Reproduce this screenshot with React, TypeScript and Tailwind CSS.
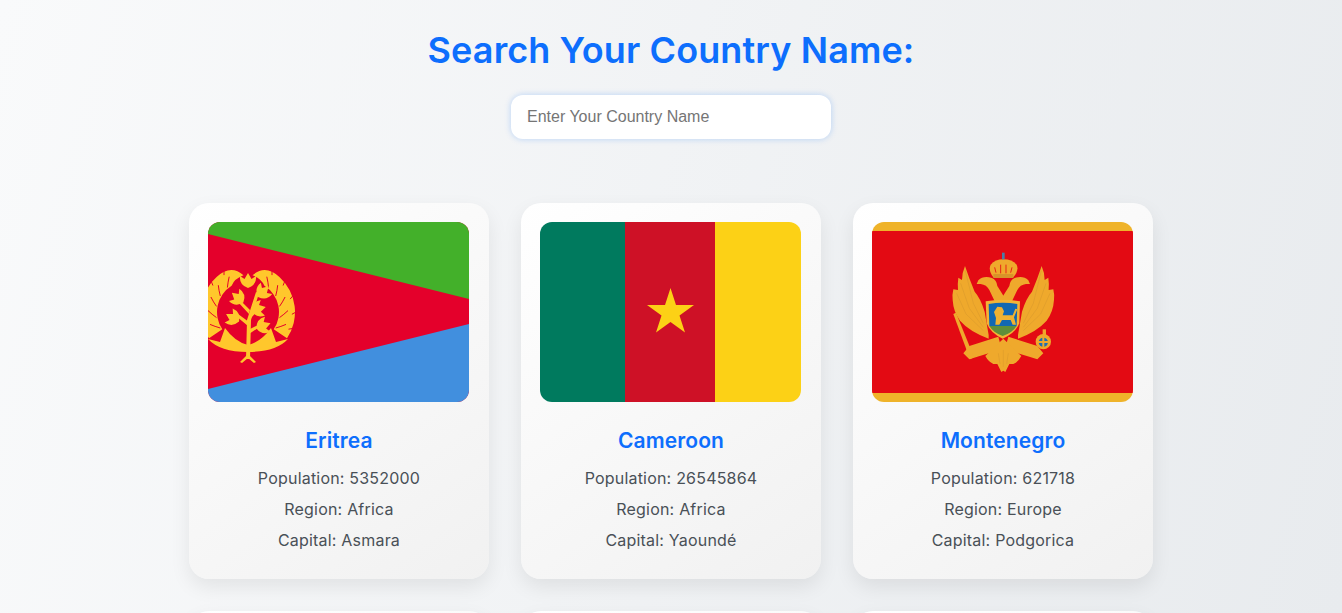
// polar point around the centre of the Eritrean wreath
const wp = (r: number, deg: number) => {
  const a = (deg * Math.PI) / 180;
  return `${(40 + r * Math.cos(a)).toFixed(1)} ${(90 + r * Math.sin(a)).toFixed(1)}`;
};

const wreathBand = `M${wp(47, 34)} A47 47 0 0 0 ${wp(47, -48)} Q${wp(51, -70)} ${wp(37, -83)} Q${wp(36, -68)} ${wp(31, -58)} A31 31 0 0 1 ${wp(31, 34)} Z`;

const wreathCuts = [-56, -36, -16, 4, 24]
  .map((d) => `M${wp(32, d + 6)} Q${wp(36, d)} ${wp(40, d - 6)}`)
  .join(" ");

const wreathNicks = [-60, -40, -20, 0, 20]
  .map((d) => `M${wp(48, d)} L${wp(44, d + 3)}`)
  .join(" ");

const sprigs = [
  { x: 40, y: 59, r: 0 },
  { x: 30, y: 76, r: -50 },
  { x: 55, y: 70, r: 45 },
  { x: 50, y: 87, r: 75 },
  { x: 25, y: 96, r: -60 },
  { x: 55, y: 104, r: 70 },
];

const Eritrea = () => (
  <svg viewBox="0 0 261 180" className="block h-full w-full">
    <rect width="261" height="180" fill="#e4002b" />
    <polygon points="0,0 261,0 261,77 0,12" fill="#43b02a" />
    <polygon points="0,167 261,102 261,180 0,180" fill="#418fde" />
    <g fill="#ffc72c">
      {[1, -1].map((side) => (
        <g key={side} transform={side === 1 ? undefined : "translate(80 0) scale(-1 1)"}>
          <path d={wreathBand} />
          <path d={wreathCuts} fill="none" stroke="#e4002b" strokeWidth="1" />
          <path d={wreathNicks} fill="none" stroke="#e4002b" strokeWidth="1" />
          <path d="M40 123 Q53 120 63 106 L68 120 L80 117 Q68 130 40 130 Z" />
        </g>
      ))}
      <path d="M38 137 L39 98 L48 70 L51 71 L43 98 L42 137 Z" />
      <path d="M41 100 L30 92 L28 94 L40 104 Z M43 96 L52 86 L50 84 L41 92 Z M41 112 L53 104 L52 102 L40 108 Z M42 88 L32 78 L30 80 L41 92 Z" />
      <path d="M32 140 L40 132 L48 140 L46 141 L40 136 L34 141 Z" />
      {sprigs.map((s) => (
        <path
          key={s.y}
          d="M0 7 Q-9 4 -8 -5 L-3.5 -2 L0 -8 L3.5 -2 L8 -5 Q9 4 0 7 Z"
          transform={`translate(${s.x} ${s.y}) rotate(${s.r})`}
        />
      ))}
    </g>
  </svg>
);

const Cameroon = () => (
  <svg viewBox="0 0 261 180" className="block h-full w-full">
    <rect width="85" height="180" fill="#007a5e" />
    <rect x="85" width="90" height="180" fill="#ce1126" />
    <rect x="175" width="86" height="180" fill="#fcd116" />
    <polygon
      points="130.5,66 136,83 154,83 139.5,93.5 145,110.5 130.5,100 116,110.5 121.5,93.5 107,83 125,83"
      fill="#fcd116"
    />
  </svg>
);

const wing =
  "M176 285 L164 215 Q152 175 134 155 L118 115 L105 78 Q96 98 96 120 L85 113 Q82 135 84 150 L70 148 Q66 165 68 180 Q70 215 90 242 Q118 274 176 296 Z";

const Montenegro = () => (
  <svg viewBox="0 0 261 180" className="block h-full w-full">
    <rect width="261" height="180" fill="#efb32a" />
    <rect y="9" width="261" height="162" fill="#e30a13" />
    {/* coat of arms, drawn in the 420 wide space around the eagle */}
    <g transform="translate(58 18) scale(0.3333)" fill="#efa92c">
      {[1, -1].map((side) => (
        <g key={side} transform={side === 1 ? undefined : "translate(440 0) scale(-1 1)"}>
          <path d={wing} />
          <path
            d="M106 92 L130 190 L160 250 M92 130 L118 205 L160 262 M80 160 L108 222 L160 272"
            stroke="#dc9c2c"
            strokeWidth="2"
            fill="none"
          />
          <path d="M145 121 Q160 106 186 114 Q200 120 202 138 L226 176 L198 192 L178 150 Q170 134 152 132 L140 132 Z" />
          <path d="M205 290 L118 318 L100 340 L118 358 L142 350 L215 328 Z" />
        </g>
      ))}
      <path d="M70 222 L78 218 L132 352 L120 358 Z" />
      <path d="M220 296 L250 325 L274 348 Q265 365 250 372 L238 372 L226 396 L220 392 L214 396 L202 372 L190 372 Q175 365 166 348 L190 325 Z" />
      <path d="M220 330 L220 380 M205 340 L210 372 M235 340 L230 372" stroke="#dc9c2c" strokeWidth="2" fill="none" />
      <path d="M190 112 Q174 90 182 74 Q196 58 220 58 Q246 58 260 74 Q268 90 250 112 Z" />
      <path d="M212 100 L212 74 M228 100 L228 74 M198 98 L194 82 M242 98 L246 82" stroke="#e30a13" strokeWidth="2.5" fill="none" />
      <rect x="190" y="102" width="60" height="12" fill="#d8942a" />
      <rect x="216" y="38" width="8" height="20" fill="#4a7fa8" />
      <circle cx="340" cy="305" r="23" />
      <circle cx="340" cy="307" r="14" fill="#1f6fb2" />
      <path d="M324 303 L356 303 L356 309 L324 309 Z M337 290 L343 290 L343 324 L337 324 Z" />
      <rect x="338" y="268" width="10" height="22" />
      <path d="M167 184 Q218 174 270 184 L268 250 Q256 280 218 296 Q182 280 170 250 Z" fill="#f2b436" />
      <path d="M176 192 Q218 184 262 192 L260 258 L178 258 Z" fill="#1268b3" />
      <path d="M178 258 L260 258 Q248 278 218 288 Q190 278 178 258 Z" fill="#5f8f3a" />
      <path d="M196 254 L198 234 L192 216 L202 200 L216 202 L222 214 L218 226 L248 226 L256 206 L262 208 L252 232 L258 254 L248 254 L242 240 L216 240 L208 254 Z" fill="#f0b232" />
    </g>
  </svg>
);

const countries = [
  { name: "Eritrea", population: 5352000, region: "Africa", capital: "Asmara", Flag: Eritrea },
  { name: "Cameroon", population: 26545864, region: "Africa", capital: "Yaoundé", Flag: Cameroon },
  { name: "Montenegro", population: 621718, region: "Europe", capital: "Podgorica", Flag: Montenegro },
];

const cardClass =
  "rounded-[20px] bg-[linear-gradient(145deg,#ffffff,#f1f1f1)] shadow-[0_8px_20px_rgba(0,0,0,0.08)]";

export default function App() {
  return (
    <div className="h-[613px] overflow-hidden bg-[linear-gradient(105deg,#f9fafb,#e8ebee)] font-['Inter',sans-serif]">
      <h1 className="pt-[26px] text-center text-[36px] leading-[48px] font-semibold tracking-[0.1px] text-[#0d6efd]">
        Search Your Country Name:
      </h1>
      <div className="mt-[21px] flex justify-center">
        <input
          type="text"
          placeholder="Enter Your Country Name"
          className="h-[44px] w-[320px] rounded-[12px] bg-white px-4 font-['Liberation_Sans',sans-serif] text-base text-gray-700 shadow-[0_0_6px_rgba(13,110,253,0.25)] outline-none placeholder:text-[#757575]"
        />
      </div>
      <div className="mt-[64px] grid grid-cols-[repeat(3,300px)] justify-center gap-x-8 gap-y-8">
        {countries.map(({ name, population, region, capital, Flag }) => (
          <div key={name} className={`${cardClass} px-[19px] pt-[19px] pb-[23px] text-center`}>
            <div className="h-[180px] w-[261px] overflow-hidden rounded-[12px]">
              <Flag />
            </div>
            <h2 className="mt-6 text-[21px] leading-[30px] font-semibold tracking-[0.1px] text-[#0d6efd]">
              {name}
            </h2>
            <div className="mt-[7px] text-base leading-[31px] tracking-[0.2px] text-[#495057]">
              <p>Population: {population}</p>
              <p>Region: {region}</p>
              <p>Capital: {capital}</p>
            </div>
          </div>
        ))}
        <div className={`${cardClass} h-[376px]`} />
        <div className={`${cardClass} h-[376px]`} />
        <div className={`${cardClass} h-[376px]`} />
      </div>
    </div>
  );
}
